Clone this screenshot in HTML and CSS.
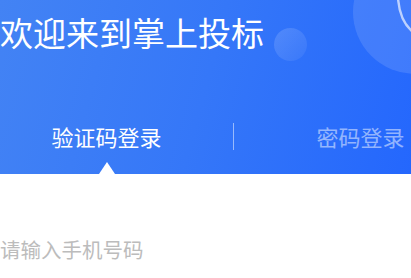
FILE: index.html
```html
<!DOCTYPE html>
<html lang="zh">
<head>
<meta charset="utf-8">
<title>掌上投标</title>
<link rel="stylesheet" href="styles.css">
</head>
<body>
<header class="hero">
  <span class="deco deco-big"></span>
  <span class="deco deco-small"></span>
  <svg class="deco-stroke" width="20" height="40" viewBox="0 0 20 40"><path d="M1 -2 C2 12 6 24 16 32" fill="none" stroke="rgba(255,255,255,0.65)" stroke-width="2.4" stroke-linecap="round"/></svg>
  <h1 class="title">欢迎来到掌上投标</h1>
  <nav class="tabs">
    <div class="tab tab-active">
      <span class="tab-label">验证码登录</span>
      <span class="tab-caret"></span>
    </div>
    <span class="tab-divider"></span>
    <div class="tab">
      <span class="tab-label">密码登录</span>
    </div>
  </nav>
</header>
<main class="form">
  <input class="phone" type="tel" placeholder="请输入手机号码">
</main>
</body>
</html>
```
FILE: styles.css
```css
* { box-sizing: border-box; }
html, body { margin: 0; padding: 0; background: #fff; }
body {
  font-family: "Noto Sans CJK SC", "Noto Sans", sans-serif;
  width: 411px;
  height: 278px;
  overflow: hidden;
}
.hero {
  position: relative;
  height: 174px;
  overflow: hidden;
  background: linear-gradient(105deg, #4383f4 0%, #3577f8 50%, #2467fd 100%);
  padding-top: 12px;
}
.deco { position: absolute; border-radius: 50%; }
.deco-big {
  left: 353px; top: -50px;
  width: 124px; height: 124px;
  background: rgba(255,255,255,0.12);
}
.deco-small {
  left: 274px; top: 28px;
  width: 33px; height: 33px;
  background: linear-gradient(135deg, rgba(255,255,255,0.16), rgba(255,255,255,0.05));
}
.deco-stroke { position: absolute; left: 397px; top: 0; }
.title {
  position: relative;
  margin: 0;
  font-size: 33px;
  line-height: 40px;
  font-weight: 400;
  color: #fff;
}
.tabs {
  position: relative;
  margin-top: 71px;
  display: grid;
  grid-template-columns: 213px 1px 213px;
  column-gap: 20px;
  align-items: start;
}
.tab {
  display: flex;
  flex-direction: column;
  align-items: center;
}
.tab-label {
  font-size: 22px;
  line-height: 27px;
  color: rgba(255,255,255,0.5);
  white-space: nowrap;
}
.tab-active .tab-label { color: #fff; }
.tab-caret {
  margin-top: 12px;
  width: 0; height: 0;
  border-left: 8px solid transparent;
  border-right: 8px solid transparent;
  border-bottom: 12px solid #fff;
}
.tab-divider {
  height: 27px;
  background: rgba(255,255,255,0.5);
}
.form { padding-top: 62px; }
.phone {
  display: block;
  width: 100%;
  border: none;
  outline: none;
  padding: 0;
  margin: 0;
  background: transparent;
  font-family: inherit;
  font-size: 20.5px;
  line-height: 26px;
  height: 26px;
  color: #333;
}
.phone::placeholder { color: #bcbcbc; }
```
